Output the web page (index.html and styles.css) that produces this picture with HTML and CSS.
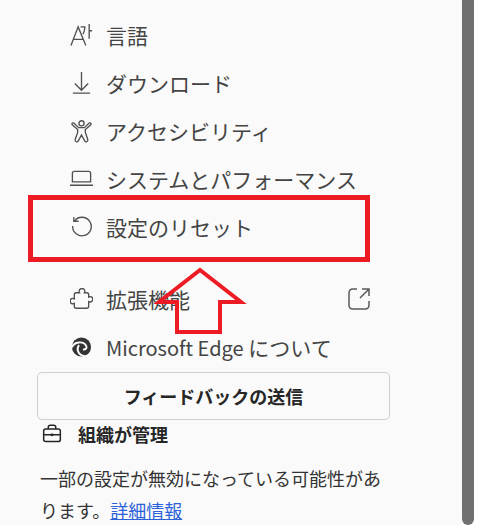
FILE: index.html
```html
<!DOCTYPE html>
<html lang="ja">
<head>
  <meta charset="UTF-8" />
  <title>設定</title>
  <link rel="stylesheet" href="styles.css">
</head>
<body>
  <div class="panel">
    <div class="menu">
      <div class="item">
        <svg class="icon" viewBox="0 0 24 24"><path d="M1 22.500 8.500 3l8 19.500M3.500 16h10.500M11 3h4.500q0 4-2 7.500M20 0v15.500M20 7h3"/></svg>
        <span>言語</span>
      </div>
      <div class="item">
        <svg class="icon" viewBox="0 0 24 24"><path d="M12 0v19M5 12l7 7 7-7M3 22h18"/></svg>
        <span>ダウンロード</span>
      </div>
      <div class="item">
        <svg class="icon" viewBox="0 0 24 24"><circle cx="12" cy="3.500" r="2.700"/><path d="M3 3Q1.500 3.500 2.300 5L8 10v3L5.500 20Q5 22 6.500 22.700 8 23 8.800 21.500L12 15.500l3.200 6Q16 23 17.500 22.700 19 22 18.500 20L16 13v-3l5.700-5Q22.500 3.500 21 3 20.500 2.800 20 3.200L15 8H9L4 3.200Q3.500 2.800 3 3z"/></svg>
        <span>アクセシビリティ</span>
      </div>
      <div class="item">
        <svg class="icon" viewBox="0 0 24 24"><path d="M2.500 14.500V5.500Q2.500 3.500 4.500 3.500h15Q21.500 3.500 21.500 5.500v9zM0 18h24"/></svg>
        <span>システムとパフォーマンス</span>
      </div>
      <div class="item">
        <svg class="icon" viewBox="0 0 24 24"><path d="M4 1v4.500h5M4.500 5.500A9.700 9.700 0 1 1 2.800 10.500"/></svg>
        <span>設定のリセット</span>
      </div>
      <div class="item item-gap">
        <svg class="icon" viewBox="0 0 24 24"><path d="M6.500 5h3.500Q9.500 4 9.500 3.500a3 3 0 0 1 6 0Q15.500 4 15 5h2.500q2 0 2 2v2.500q1-.5 1.500-.5a2.800 2.800 0 0 1 0 5.600q-.5 0-1.500-.5v5q0 2-2 2H6.500q-2 0-2-2V16q-1 .5-1.500.5a2.800 2.800 0 0 1 0-5.600q.5 0 1.500.5V7q0-2 2-2z"/></svg>
        <span class="item-label">拡張機能</span>
        <svg class="open-icon" viewBox="0 0 22 22"><path d="M9 1H5Q1 1 1 5v12q0 4 4 4h12q4 0 4-4v-4M14 1h7v7M21 1 12 10"/></svg>
      </div>
      <div class="item">
        <svg class="icon edge-icon" viewBox="0 0 24 24">
          <circle cx="12" cy="11.500" r="10"/>
          <path class="edge-swirl" d="M2 12C4 6 14 4.500 17 10.500 18 13 16 14.500 13.500 14"/>
          <path class="edge-swirl" d="M9.500 9.500C6.500 13 8 19 13 20.500 16 21.500 19 21 21 19"/>
        </svg>
        <span><span class="latin">Microsoft Edge</span> について</span>
      </div>
    </div>

    <button class="feedback">フィードバックの送信</button>

    <div class="org">
      <svg class="org-icon" viewBox="0 0 24 24"><path d="M7.500 6V4q0-2.500 2.500-2.500h4Q16.500 1.500 16.500 4v2M4.500 6h15Q22 6 22 8.500v10q0 2.500-2.500 2.500h-15Q2 21 2 18.500v-10Q2 6 4.500 6zM2 13h20"/><path class="org-dot" d="M10.500 11.500h3v3h-3z"/></svg>
      <span>組織が管理</span>
    </div>
    <p class="note">一部の設定が無効になっている可能性があります。<a href="#">詳細情報</a></p>
  </div>
  <div class="scrollbar"></div>

  <div class="callout"></div>
  <svg class="arrow" viewBox="0 0 100 76"><path d="M50 6 91 38H70V68H27V38H9z"/></svg>
</body>
</html>
```

FILE: styles.css
```css
html, body {
  margin: 0;
  padding: 0;
  height: 525px;
  overflow: hidden;
}

body {
  font-family: 'Noto Sans CJK JP', 'Noto Sans', sans-serif;
  background-color: #ffffff;
  color: #444444;
  display: flex;
  align-items: flex-start;
  width: 494px;
  position: relative;
}

.panel {
  width: 462px;
  height: 525px;
  box-sizing: border-box;
  background-color: #fafafa;
  padding: 12px 0 0 37px;
  overflow: hidden;
}

.scrollbar {
  width: 12px;
  height: 525px;
  background-color: #707070;
  border-radius: 0 0 6px 6px;
}

.item {
  height: 48px;
  box-sizing: border-box;
  display: flex;
  align-items: center;
  padding: 0 0 2px 33px;
  width: 333px;
  font-size: 21px;
  white-space: nowrap;
}

.latin {
  font-size: 20px;
}

.item-gap {
  margin-top: 24px;
}

.item-label {
  flex: 1;
}

.icon {
  width: 23px;
  height: 23px;
  margin-right: 13px;
  flex: none;
  fill: none;
  stroke: #505050;
  stroke-width: 1.400;
}

.edge-icon {
  fill: #333333;
  stroke: none;
}

.edge-swirl {
  fill: none;
  stroke: #fafafa;
  stroke-width: 2;
}

.open-icon {
  width: 22px;
  height: 22px;
  flex: none;
  fill: none;
  stroke: #5a5a5a;
  stroke-width: 1.500;
}

.feedback {
  display: block;
  width: 353px;
  height: 48px;
  padding: 0;
  border: 1px solid #cfcfcf;
  border-radius: 5px;
  background-color: #fafafa;
  color: #262626;
  font-family: inherit;
  font-size: 18px;
  font-weight: 700;
}

.org {
  display: flex;
  align-items: center;
  height: 30px;
  padding: 0 0 2px 5px;
  box-sizing: border-box;
  color: #262626;
  font-size: 18px;
  font-weight: 700;
}

.org-icon {
  width: 20px;
  height: 20px;
  margin-right: 16px;
  fill: none;
  stroke: #262626;
  stroke-width: 1.800;
}

.org-dot {
  fill: #262626;
  stroke: none;
}

.note {
  margin: 12px 0 0 3px;
  width: 348px;
  font-size: 18px;
  line-height: 32px;
  color: #333333;
}

.note a {
  color: #2b62d9;
}

.callout {
  position: absolute;
  left: 28px;
  top: 195px;
  width: 342px;
  height: 67px;
  box-sizing: border-box;
  border: 5px solid #ed1c24;
}

.arrow {
  position: absolute;
  left: 150px;
  top: 264px;
  width: 100px;
  height: 76px;
  fill: none;
  stroke: #ed1c24;
  stroke-width: 4;
}
```
